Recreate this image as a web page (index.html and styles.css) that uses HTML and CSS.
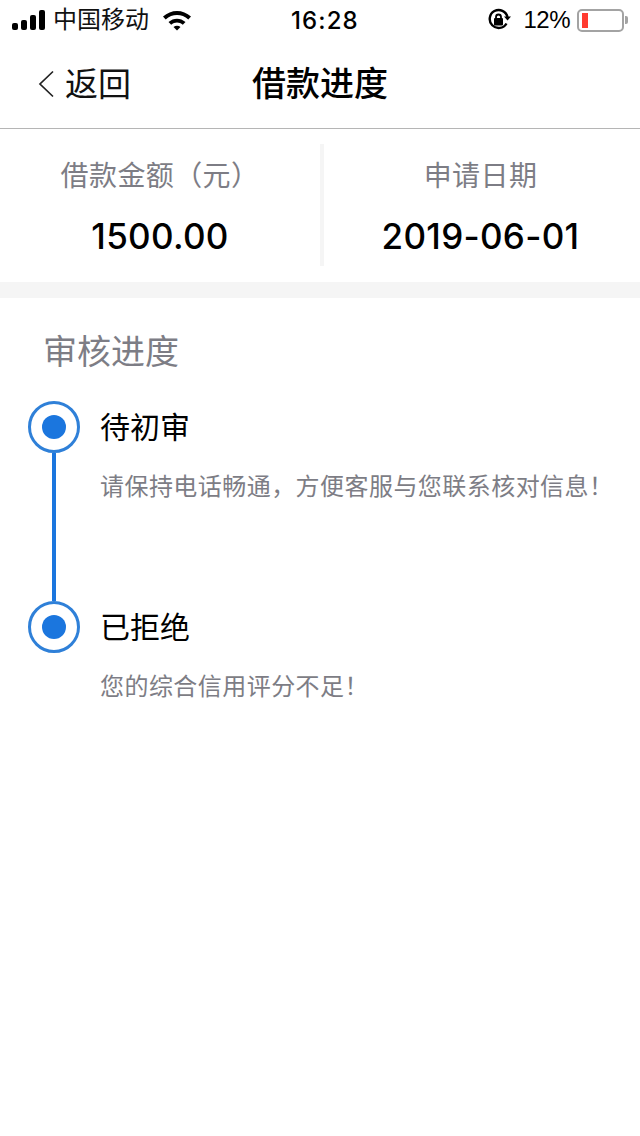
FILE: index.html
```html
<!DOCTYPE html>
<html lang="zh-CN">
<head>
<meta charset="utf-8">
<title>借款进度</title>
<link rel="stylesheet" href="styles.css">
</head>
<body>
<div class="status">
  <div class="status-left">
    <svg class="signal" width="33" height="20" viewBox="0 0 33 20"><rect x="0" y="13" width="6" height="7" rx="2"/><rect x="9" y="10" width="6" height="10" rx="2"/><rect x="18" y="5" width="6" height="15" rx="2"/><rect x="27" y="0" width="6" height="20" rx="2"/></svg>
    <span class="carrier">中国移动</span>
    <svg class="wifi" width="30" height="22" viewBox="0 0 30 22"><path d="M1 7.500C9 0 21 0 29 7.500L26.300 10.400C19.800 4.500 10.200 4.500 3.700 10.400Z"/><path d="M6.500 13C11.500 8.500 18.500 8.500 23.500 13L20.800 15.800C17.300 12.800 12.700 12.800 9.200 15.800Z"/><path d="M11.500 18C13.500 16.300 16.500 16.300 18.500 18L15 21.500Z"/></svg>
  </div>
  <span class="time">16:28</span>
  <div class="status-right">
    <svg class="lock" width="24" height="24" viewBox="0 0 24 24"><path class="lock-ring" d="M19.500 15.500A9 9 0 1 1 20.500 9"/><path d="M17 8.500h7l-3.500 4z"/><rect x="7" y="10" width="9" height="7.500" rx="1"/><path class="lock-bow" d="M9 10.500V9a2.500 2.500 0 0 1 5 0v1.500"/></svg>
    <span class="percent">12%</span>
    <div class="battery"><div class="battery-body"><div class="battery-level"></div></div><div class="battery-tip"></div></div>
  </div>
</div>
<header class="nav">
  <div class="back">
    <svg width="16" height="28" viewBox="0 0 16 28"><path d="M15 1.500 2 14 15 26.500"/></svg>
    <span>返回</span>
  </div>
  <h1>借款进度</h1>
</header>
<section class="summary">
  <div class="cell">
    <div class="label">借款金额（元）</div>
    <div class="value">1500.00</div>
  </div>
  <div class="cell cell-right">
    <div class="label">申请日期</div>
    <div class="value">2019-06-01</div>
  </div>
</section>
<section class="progress">
  <h2>审核进度</h2>
  <div class="step">
    <div class="track"><div class="dot"><i></i></div><div class="line"></div></div>
    <div class="step-text">
      <div class="step-title">待初审</div>
      <div class="step-desc">请保持电话畅通，方便客服与您联系核对信息！</div>
    </div>
  </div>
  <div class="step step-last">
    <div class="track"><div class="dot"><i></i></div></div>
    <div class="step-text">
      <div class="step-title">已拒绝</div>
      <div class="step-desc">您的综合信用评分不足！</div>
    </div>
  </div>
</section>
</body>
</html>
```
FILE: styles.css
```css
* { box-sizing: border-box; }
html, body { margin: 0; padding: 0; }
body {
  width: 640px;
  height: 1136px;
  overflow: hidden;
  background: #fff;
  color: #000;
  font-family: "Liberation Sans", "Noto Sans CJK SC", sans-serif;
}
.status {
  height: 40px;
  position: relative;
  display: flex;
  align-items: center;
  justify-content: space-between;
  padding: 0 12px 0 12px;
}
.status-left, .status-right { display: flex; align-items: center; }
.signal { fill: #000; margin-right: 8px; }
.carrier { font-size: 24px; line-height: 42px; width: 95px; color: #111; white-space: nowrap; }
.wifi { fill: #000; margin-left: 14px; }
.time {
  position: absolute;
  left: 291px;
  top: 0;
  font-size: 24px;
  line-height: 42px;
  letter-spacing: 1.100px;
  font-family: "Inter", "Liberation Sans", sans-serif;
  font-weight: 500;
}
.lock { fill: #000; margin-right: 12px; }
.lock-ring { fill: none; stroke: #000; stroke-width: 2.400; }
.lock-bow { fill: none; stroke: #000; stroke-width: 1.800; }
.percent { font-size: 24px; line-height: 42px; margin-right: 7px; letter-spacing: -0.500px; }
.battery { display: flex; align-items: center; }
.battery-body {
  width: 47px;
  height: 23px;
  border: 2px solid #a3a3a3;
  border-radius: 5px;
  padding: 2px;
}
.battery-level { width: 6px; margin-left: 1px; height: 100%; background: #ff3b30; }
.battery-tip { width: 3px; height: 8px; background: #a3a3a3; margin-left: 1px; border-radius: 0 2px 2px 0; }
.nav {
  height: 89px;
  position: relative;
  display: flex;
  align-items: center;
  justify-content: center;
  border-bottom: 1px solid #b5b5b5;
}
.nav h1 { margin: 0; font-size: 34px; line-height: 88px; font-weight: 500; }
.back {
  position: absolute;
  left: 37px;
  top: 0;
  height: 84px;
  display: flex;
  align-items: center;
  gap: 12px;
  font-size: 33px;
  color: #111;
}
.back svg { fill: none; stroke: #222; stroke-width: 1.700; margin-top: 4px; margin-left: 1px; margin-right: -1px; }
.summary {
  height: 169px;
  display: flex;
  padding: 15px 0 16px;
  border-bottom: 16px solid #f5f5f5;
}
.cell { flex: 0 0 320px; text-align: center; }
.cell-right { border-left: 4px solid #f5f5f5; padding-right: 3px; }
.label { font-size: 28px; line-height: 40px; margin-top: 13px; color: #7d7d85; letter-spacing: 0.400px; }
.value { font-size: 35px; line-height: 50px; margin-top: 14px; font-weight: 500; letter-spacing: 0.300px; font-family: "Inter", "Liberation Sans", sans-serif; }
.progress { padding: 32px 0 0 28px; }
.progress h2 { margin: 0 0 27px 15px; font-size: 34px; line-height: 44px; font-weight: 400; color: #7d7d85; }
.step { display: flex; height: 200px; }
.track { width: 52px; display: flex; flex-direction: column; align-items: center; }
.dot {
  width: 52px;
  height: 52px;
  flex: none;
  border: 3px solid #2f80d8;
  border-radius: 50%;
  display: flex;
  align-items: center;
  justify-content: center;
}
.dot i { width: 24px; height: 24px; border-radius: 50%; background: #1b76de; }
.line { width: 4px; flex: 1; background: #1b76de; }
.step-text { margin-left: 20px; }
.step-title { font-size: 30px; line-height: 54px; color: #000; }
.step-desc { font-size: 24px; line-height: 36px; margin-top: 14px; color: #7d7d85; white-space: nowrap; letter-spacing: 0.450px; }
```
